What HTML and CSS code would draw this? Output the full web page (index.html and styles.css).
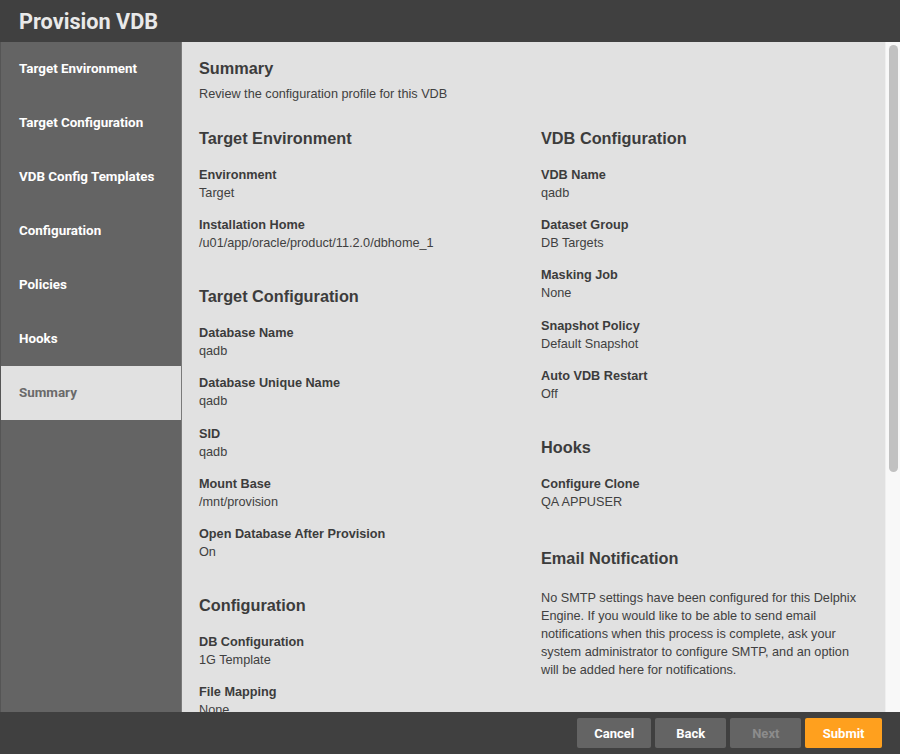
FILE: index.html
```html
<!DOCTYPE html>
<html>
<head>
<meta charset="utf-8">
<title>Provision VDB</title>
<link rel="stylesheet" href="styles.css">
</head>
<body>
<div class="dialog">
  <header class="titlebar">Provision VDB</header>
  <div class="body">
    <nav class="steps">
      <div class="step">Target Environment</div>
      <div class="step">Target Configuration</div>
      <div class="step">VDB Config Templates</div>
      <div class="step">Configuration</div>
      <div class="step">Policies</div>
      <div class="step">Hooks</div>
      <div class="step active">Summary</div>
      <div class="step-fill"></div>
    </nav>
    <main class="pane">
      <div class="content">
        <h1 class="title">Summary</h1>
        <p class="intro">Review the configuration profile for this VDB</p>
        <div class="columns">
          <div class="col">
            <h2 class="section">Target Environment</h2>
            <div class="field"><div class="label">Environment</div><div class="value">Target</div></div>
            <div class="field"><div class="label">Installation Home</div><div class="value">/u01/app/oracle/product/11.2.0/dbhome_1</div></div>
            <h2 class="section">Target Configuration</h2>
            <div class="field"><div class="label">Database Name</div><div class="value">qadb</div></div>
            <div class="field"><div class="label">Database Unique Name</div><div class="value">qadb</div></div>
            <div class="field"><div class="label">SID</div><div class="value">qadb</div></div>
            <div class="field"><div class="label">Mount Base</div><div class="value">/mnt/provision</div></div>
            <div class="field"><div class="label">Open Database After Provision</div><div class="value">On</div></div>
            <h2 class="section">Configuration</h2>
            <div class="field"><div class="label">DB Configuration</div><div class="value">1G Template</div></div>
            <div class="field"><div class="label">File Mapping</div><div class="value">None</div></div>
          </div>
          <div class="col">
            <h2 class="section">VDB Configuration</h2>
            <div class="field"><div class="label">VDB Name</div><div class="value">qadb</div></div>
            <div class="field"><div class="label">Dataset Group</div><div class="value">DB Targets</div></div>
            <div class="field"><div class="label">Masking Job</div><div class="value">None</div></div>
            <div class="field"><div class="label">Snapshot Policy</div><div class="value">Default Snapshot</div></div>
            <div class="field"><div class="label">Auto VDB Restart</div><div class="value">Off</div></div>
            <h2 class="section">Hooks</h2>
            <div class="field"><div class="label">Configure Clone</div><div class="value">QA APPUSER</div></div>
            <h2 class="section email">Email Notification</h2>
            <p class="note">No SMTP settings have been configured for this Delphix Engine. If you would like to be able to send email notifications when this process is complete, ask your system administrator to configure SMTP, and an option will be added here for notifications.</p>
          </div>
        </div>
      </div>
    </main>
    <div class="scrollbar"><div class="thumb"></div></div>
  </div>
  <footer class="actions">
    <button class="btn">Cancel</button>
    <button class="btn">Back</button>
    <button class="btn disabled">Next</button>
    <button class="btn primary">Submit</button>
  </footer>
</div>
</body>
</html>
```
FILE: styles.css
```css
html, body {
  margin: 0;
  padding: 0;
  height: 100%;
}
body {
  background: #404040;
  font-family: "Liberation Sans", Arial, sans-serif;
  overflow: hidden;
}
.dialog {
  display: flex;
  flex-direction: column;
  width: 900px;
  height: 754px;
}
.titlebar {
  flex: 0 0 42px;
  height: 42px;
  box-sizing: border-box;
  padding-left: 19px;
  display: flex;
  align-items: center;
  background: #404040;
  color: #e9e9e9;
  font-family: Roboto, "Liberation Sans", sans-serif;
  font-weight: 700;
  font-size: 21.7px;
}
.body {
  flex: 1 1 auto;
  display: flex;
  min-height: 0;
}
.steps {
  flex: 0 0 181px;
  width: 181px;
  box-sizing: border-box;
  border-left: 1px solid #555555;
  background: #646464;
  display: flex;
  flex-direction: column;
}
.step {
  height: 54px;
  flex: 0 0 54px;
  box-sizing: border-box;
  padding: 0 0 2px 18px;
  display: flex;
  align-items: center;
  color: #ffffff;
  font-family: Roboto, "Liberation Sans", sans-serif;
  font-weight: 700;
  font-size: 13.4px;
}
.step.active {
  background: #e1e1e1;
  color: #6a6a6a;
}
.step-fill {
  flex: 1 1 auto;
}
.pane {
  flex: 1 1 auto;
  min-width: 0;
  background: #e1e1e1;
  border-left: 1px solid #7a7a7a;
  overflow: hidden;
}
.scrollbar {
  flex: 0 0 15px;
  width: 15px;
  box-sizing: border-box;
  background: #f8f8f8;
  border-left: 1px solid #efefef;
  padding: 3px 2px 0 3px;
}
.thumb {
  height: 427px;
  border-radius: 5px;
  background: #c1c1c1;
}
.content {
  padding: 16px 0 0 17px;
  color: #404040;
}
.title {
  margin: 0;
  font-size: 16.3px;
  line-height: 20px;
  font-weight: 700;
  color: #3c3c3c;
}
.intro {
  margin: 7px 0 0;
  font-size: 12.7px;
  line-height: 18px;
}
.columns {
  display: grid;
  grid-template-columns: 342px 342px;
  margin-top: 25px;
}
.col {
  padding-right: 20px;
}
.section {
  margin: 34px 0 18px;
  font-size: 16.3px;
  line-height: 20px;
  font-weight: 700;
  color: #3c3c3c;
}
.section.email {
  margin-top: 37px;
}
.col > .section:first-child {
  margin-top: 0;
}
.field {
  margin-bottom: 14.2px;
}
.label {
  font-size: 12.7px;
  line-height: 18px;
  font-weight: 700;
  color: #3c3c3c;
}
.value {
  font-size: 12.7px;
  line-height: 18px;
}
.note {
  margin: 21px 0 0;
  font-size: 12.7px;
  line-height: 18px;
  max-width: 318px;
}
.actions {
  flex: 0 0 42px;
  height: 42px;
  display: flex;
  justify-content: flex-end;
  align-items: center;
  gap: 4px;
  padding-right: 18px;
  background: #404040;
}
.btn {
  height: 30px;
  min-width: 71px;
  padding: 0 17px;
  border: none;
  border-radius: 2px;
  background: #646464;
  color: #ffffff;
  font-family: Roboto, "Liberation Sans", sans-serif;
  font-weight: 700;
  font-size: 13px;
}
.btn.disabled {
  color: #8c8c8c;
}
.btn.primary {
  background: #ffa01e;
  padding: 0 17.5px;
}
```
